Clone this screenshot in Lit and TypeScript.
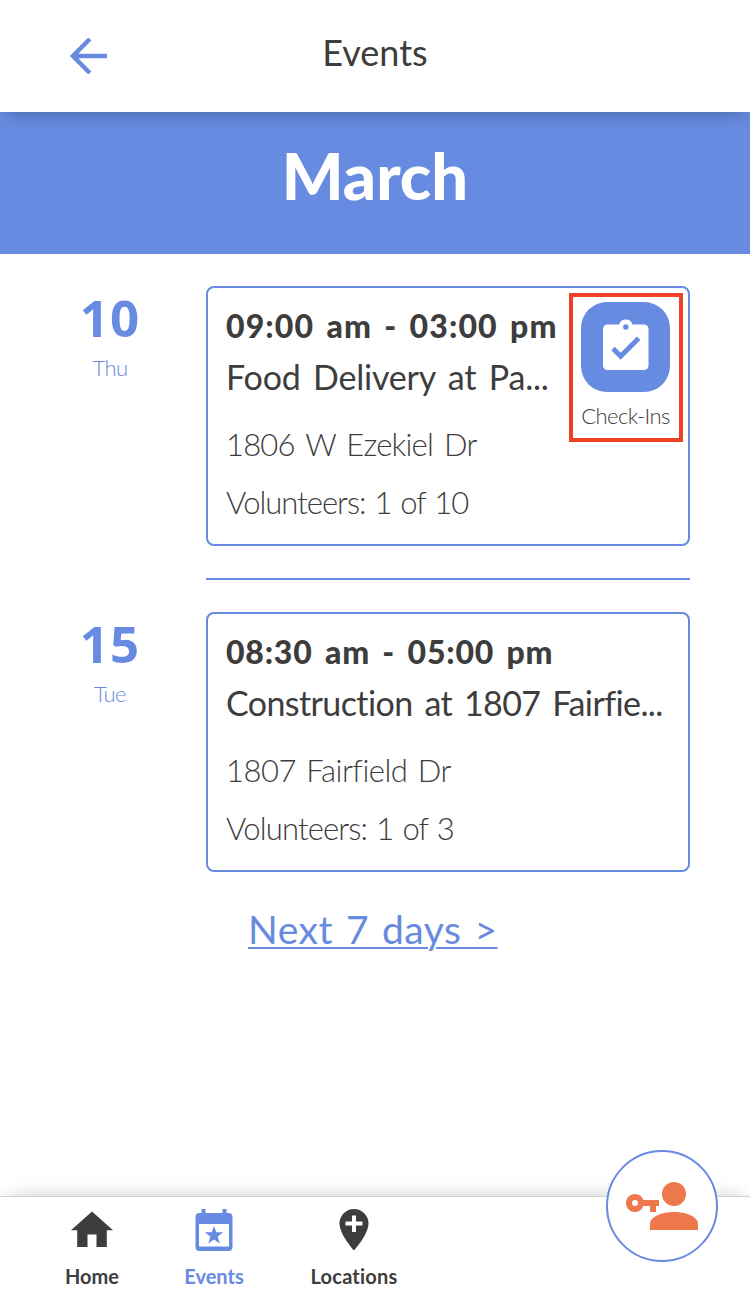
import { LitElement, html, css } from "lit";
import { customElement, property } from "lit/decorators.js";

interface EventItem {
  day: string;
  weekday: string;
  time: string;
  title: string;
  address: string;
  volunteers: string;
  checkIn: boolean;
  kind: string;
}

const EVENTS: EventItem[] = [
  { day: "10", weekday: "Thu", time: "09:00 am - 03:00 pm", title: "Food Delivery at Pa...", address: "1806 W Ezekiel Dr", volunteers: "Volunteers: 1 of 10", checkIn: true, kind: "delivery" },
  { day: "15", weekday: "Tue", time: "08:30 am - 05:00 pm", title: "Construction at 1807 Fairfie...", address: "1807 Fairfield Dr", volunteers: "Volunteers: 1 of 3", checkIn: false, kind: "construction" },
];

@customElement("event-row")
export class EventRow extends LitElement {
  @property({ attribute: false }) item!: EventItem;

  static styles = css`
    :host { display: flex; color: #3d3d3d; font-family: Lato, "Liberation Sans", sans-serif; white-space: nowrap; }
    .date { width: 206px; box-sizing: border-box; padding-left: 14px; text-align: center; color: #678be0; }
    .day { font-family: "Open Sans", Lato, sans-serif; font-size: 51px; line-height: 60px; font-weight: 700; padding-top: 1px; letter-spacing: 1px; }
    .weekday { font-size: 22px; line-height: 28px; font-weight: 300; padding-top: 7px; letter-spacing: -0.6px; }
    .card { position: relative; box-sizing: border-box; width: 484px; height: 260px; border: 2px solid #678be0; border-radius: 8px; padding: 18px 18px 0 18px; }
    .line { display: block; width: max-content; }
    .time { font-size: 32px; line-height: 40px; font-weight: 900; letter-spacing: 1.1px; word-spacing: 3.6px; }
    .title { font-size: 34px; line-height: 44px; padding-top: 9px; letter-spacing: -0.2px; word-spacing: 4px; }
    .address, .volunteers { font-size: 31px; line-height: 40px; font-weight: 300; }
    .address { padding-top: 25px; letter-spacing: -0.8px; word-spacing: 3.5px; }
    .volunteers { padding-top: 18px; letter-spacing: -1px; word-spacing: 1.5px; }
    .construction .time { letter-spacing: 0.8px; word-spacing: 4px; }
    .construction .title { letter-spacing: -0.6px; word-spacing: 3.8px; }
    .construction .address { letter-spacing: -0.5px; word-spacing: 2.5px; }
    .construction .volunteers { letter-spacing: -0.85px; word-spacing: 1.5px; }
    .checkin { position: absolute; top: 5px; right: 5px; box-sizing: border-box; width: 114px; height: 149px; border: 4px solid #ee4026; padding: 5px 1px 0 0; display: flex; flex-direction: column; align-items: center; }
    .tile { width: 89px; height: 90px; border-radius: 26px; background: #678be0; display: block; }
    .label { font-size: 22px; line-height: 28px; font-weight: 300; padding-top: 10px; letter-spacing: -0.6px; }
  `;

  render() {
    const e = this.item;
    return html`
      <div class="date">
        <div class="day">${e.day}</div>
        <div class="weekday">${e.weekday}</div>
      </div>
      <div class="card ${e.kind}">
        <span class="line time">${e.time}</span>
        <span class="line title">${e.title}</span>
        <span class="line address">${e.address}</span>
        <span class="line volunteers">${e.volunteers}</span>
        ${e.checkIn
          ? html`<div class="checkin">
              <svg class="tile" viewBox="0 0 89 90">
                <path fill="#fff" d="M26.500 22.500h11.600a7 7 0 0 1 13.400 0H63a4.500 4.500 0 0 1 4.500 4.500v36.500a4.500 4.500 0 0 1-4.500 4.500H26.500a4.500 4.500 0 0 1-4.500-4.500V27a4.500 4.500 0 0 1 4.500-4.500z" />
                <circle cx="44.800" cy="25" r="2.700" fill="#678be0" />
                <path fill="none" stroke="#678be0" stroke-width="5" d="M32 46.500l7.700 7.700 18-18" />
              </svg>
              <span class="label">Check-Ins</span>
            </div>`
          : null}
      </div>
    `;
  }
}

@customElement("app-root")
export class AppRoot extends LitElement {
  static styles = css`
    :host { display: flex; flex-direction: column; position: relative; width: 750px; height: 1294px; overflow: hidden; background: #fff; color: #3d3d3d; font-family: Lato, "Liberation Sans", sans-serif; white-space: nowrap; }
    .bar { position: relative; z-index: 1; display: grid; grid-template-columns: 176px 1fr 176px; height: 112px; flex: none; background: #fff; box-shadow: 0 8px 16px -8px rgba(0, 0, 0, 0.32); }
    .back { margin: 37px 0 0 69px; width: 39px; height: 38px; }
    .heading { text-align: center; font-size: 36px; line-height: 44px; padding-top: 30px; }
    .month { height: 142px; flex: none; background: #678be0; color: #fff; text-align: center; font-size: 65px; font-weight: 900; line-height: 80px; box-sizing: border-box; padding-top: 23px; }
    .list { flex: 1; padding-top: 32px; }
    .divider { height: 2px; margin: 32px 60px 32px 206px; background: #678be0; }
    .more { padding: 33px 0 0 248px; font-size: 39px; line-height: 48px; color: #678be0; letter-spacing: 0.5px; word-spacing: 2.5px; }
    .more u { text-decoration-thickness: 2px; text-underline-offset: 3px; }
    .tabs { position: relative; height: 98px; flex: none; box-sizing: border-box; border-top: 1px solid #d2d2d2; background: #fff; box-shadow: 0 -8px 16px -8px rgba(0, 0, 0, 0.2); display: flex; padding-left: 31px; }
    .tab { width: 122px; display: flex; flex-direction: column; align-items: center; font-size: 20px; font-weight: 700; line-height: 24px; }
    .tab.active { color: #678be0; }
    .tab.wide { width: 158px; letter-spacing: 0.2px; }
    .icon { width: 48px; height: 48px; margin: 9px 0 10px; fill: currentColor; }
    .fab { position: absolute; top: 1150px; left: 606px; width: 112px; height: 112px; }
  `;

  render() {
    return html`
      <header class="bar">
        <svg class="back" viewBox="0 0 39 38" fill="none" stroke="#678be0" stroke-width="4.500"><path d="M38 19H4M20.800 2L4 19l16.800 17" /></svg>
        <div class="heading">Events</div>
      </header>
      <div class="month">March</div>
      <main class="list">
        <event-row .item=${EVENTS[0]}></event-row>
        <div class="divider"></div>
        <event-row .item=${EVENTS[1]}></event-row>
        <div class="more"><u>Next 7 days &gt;</u></div>
      </main>
      <nav class="tabs">
        <div class="tab">
          <svg class="icon" viewBox="0 0 48 48"><path d="M24 5.500L3 24.200H9.200V41H19.500V28.500H28.500V41H38.800V24.200H45z" /></svg>
          <span>Home</span>
        </div>
        <div class="tab active">
          <svg class="icon" viewBox="0 0 48 48">
            <path fill-rule="evenodd" d="M11.500 3h4v4h17V3h4v4h2a4 4 0 0 1 4 4v30a4 4 0 0 1-4 4h-29a4 4 0 0 1-4-4V11a4 4 0 0 1 4-4h2zM9 18v22.500h30V18z" />
            <path d="M24 20l2.300 6.300h6.900l-5.500 4.200 2 7-5.700-4.100-5.700 4.100 2-7-5.500-4.200h6.900z" />
          </svg>
          <span>Events</span>
        </div>
        <div class="tab wide">
          <svg class="icon" viewBox="0 0 48 48"><path fill-rule="evenodd" d="M24 3a14.500 14.500 0 0 0-14.500 14.500C9.500 28.500 24 44.500 24 44.500S38.500 28.500 38.500 17.500A14.500 14.500 0 0 0 24 3zM22 9.500h4v6h6.500v4H26v6.500h-4v-6.500h-6.500v-4H22z" /></svg>
          <span>Locations</span>
        </div>
      </nav>
      <svg class="fab" viewBox="0 0 112 112">
        <circle cx="56" cy="56" r="55" fill="#fff" stroke="#678be0" stroke-width="2" />
        <g fill="#ed784c">
          <circle cx="68" cy="44" r="12" />
          <path d="M44 80V74C44 66.500 56 62 68 62s24 4.500 24 12v6z" />
          <path fill-rule="evenodd" d="M29 44a9 9 0 0 1 8.400 6H53v6h-3v6h-6v-6h-6.600A9 9 0 1 1 29 44zm0 6a3 3 0 1 0 0 6 3 3 0 0 0 0-6z" />
        </g>
      </svg>
    `;
  }
}
